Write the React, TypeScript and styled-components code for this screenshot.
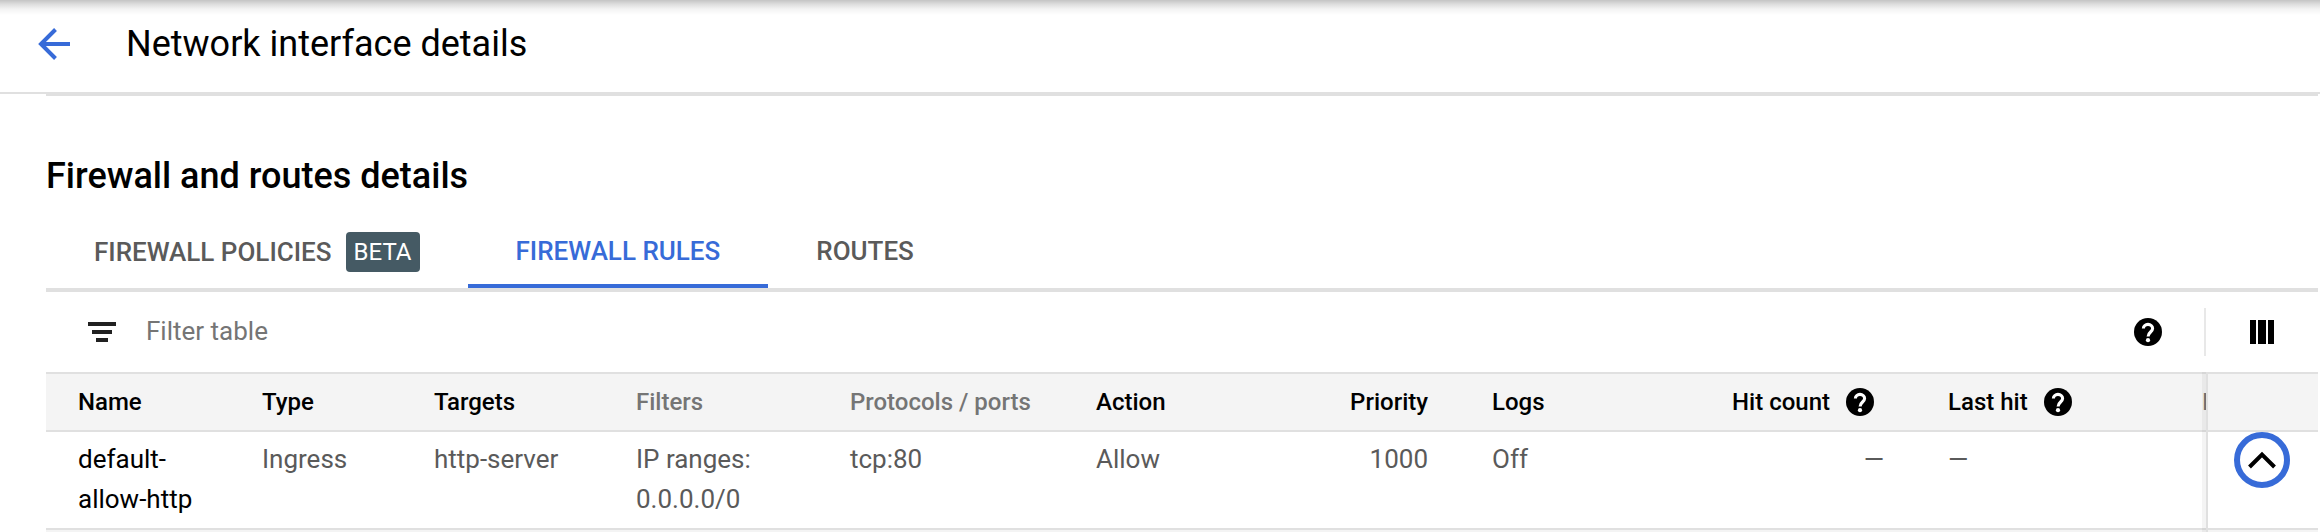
import React from "react";
import styled, { createGlobalStyle, css } from "styled-components";

const blue = "#376bd8";
const line = "#e0e0e0";

const GlobalStyle = createGlobalStyle`
  * { box-sizing: border-box; }
  body { margin: 0; background: #fff; font-family: Roboto, "Liberation Sans", sans-serif; color: #000; }
`;

const Page = styled.div`
  height: 532px;
  overflow: hidden;
  background: #fff;
`;

const Header = styled.header`
  height: 94px;
  display: flex;
  align-items: flex-start;
  padding: 22px 0 0 38px;
  border-bottom: 2px solid ${line};
  background: linear-gradient(#c4c4c4 0, #dcdcdc 4px, #f3f3f3 9px, #fff 15px);
`;

const BackButton = styled.button`
  display: flex;
  padding: 0;
  border: 0;
  background: none;
  margin: 6px 56px 0 0;
`;

const Title = styled.h1`
  margin: 0;
  font-size: 36px;
  line-height: 44px;
  font-weight: 400;
`;

const Content = styled.main`
  margin: 0 2px 0 46px;
  border-top: 2px solid ${line};
`;

const SectionTitle = styled.h2`
  margin: 0;
  padding-top: 58px;
  font-size: 36px;
  line-height: 44px;
  font-weight: 500;
`;

const Tabs = styled.nav`
  display: flex;
  height: 74px;
  margin-top: 20px;
  border-bottom: 4px solid ${line};
`;

const Tab = styled.div<{ $active?: boolean }>`
  display: flex;
  align-items: flex-start;
  padding: 13px 48px 0;
  font-size: 26px;
  line-height: 40px;
  font-weight: 500;
  white-space: nowrap;
  color: ${(p) => (p.$active ? blue : "#5a5a5a")};
  border-bottom: 4px solid ${(p) => (p.$active ? blue : "transparent")};
`;

const TabLabel = styled.span<{ $lowered?: boolean }>`
  padding-top: ${(p) => (p.$lowered ? 1 : 0)}px;
`;

const Badge = styled.span`
  margin: 1px 0 0 14px;
  width: 74px;
  height: 40px;
  border-radius: 4px;
  background: #455a64;
  color: #fff;
  font-size: 24px;
  font-weight: 400;
  text-align: center;
`;

const Toolbar = styled.div`
  height: 80px;
  display: flex;
  align-items: center;
  padding: 0 44px 0 42px;
`;

const FilterLabel = styled.span`
  flex: 1;
  margin: -1px 0 1px 30px;
  font-size: 26px;
  line-height: 40px;
  color: #757575;
`;

const Divider = styled.span`
  width: 2px;
  height: 48px;
  margin: 0 44px 0 42px;
  background: #e8e8e8;
`;

const TableArea = styled.div`
  display: flex;
  height: 160px;
`;

const Scroller = styled.div`
  flex: 1;
  min-width: 0;
  overflow: hidden;
`;

const headLook = css`
  height: 60px;
  background: #f4f4f4;
  border-top: 2px solid ${line};
  border-bottom: 2px solid ${line};
`;

const bodyLook = css`
  height: 98px;
  border-bottom: 2px solid ${line};
`;

const rowGrid = css`
  display: grid;
  grid-template-columns: 184px 172px 202px 214px 246px 200px 132px 264px 192px 318px 200px;
  padding-left: 32px;
`;

const HeadRow = styled.div`
  ${headLook}
  ${rowGrid}
  align-items: center;
  font-size: 24px;
  line-height: 28px;
  font-weight: 500;
  white-space: nowrap;
`;

const BodyRow = styled.div`
  ${bodyLook}
  ${rowGrid}
  padding-top: 7px;
  font-size: 26px;
  line-height: 40px;
  color: #5a5a5a;
`;

const HeadCell = styled.div<{ $end?: boolean; $muted?: boolean; $inset?: number }>`
  display: flex;
  align-items: center;
  gap: 16px;
  justify-content: ${(p) => (p.$end ? "flex-end" : "flex-start")};
  padding-right: ${(p) => (p.$end && p.$inset ? p.$inset : 0)}px;
  padding-left: ${(p) => (!p.$end && p.$inset ? p.$inset : 0)}px;
  color: ${(p) => (p.$muted ? "#757575" : "#000")};
`;

const BodyCell = styled.div<{ $end?: boolean; $strong?: boolean; $inset?: number }>`
  white-space: pre-line;
  text-align: ${(p) => (p.$end ? "right" : "left")};
  padding-left: ${(p) => p.$inset ?? 0}px;
  color: ${(p) => (p.$strong ? "#000" : "inherit")};
`;

const NextRow = styled.div`
  height: 2px;
  background: #f4f4f4;
`;

const StickyColumn = styled.div`
  position: relative;
  width: 112px;
  border-left: 2px solid rgba(0, 0, 0, 0.12);
  box-shadow: -4px 0 0 rgba(0, 0, 0, 0.045);
`;

const StickyHead = styled.div`
  ${headLook}
`;

const StickyBody = styled.div`
  ${bodyLook}
  padding-left: 26px;
`;

const ExpandButton = styled.button`
  display: flex;
  align-items: center;
  justify-content: center;
  width: 56px;
  height: 56px;
  padding: 0;
  border: 6px solid ${blue};
  border-radius: 50%;
  background: #fff;
`;

const HelpIcon = () => (
  <svg width="28" height="28" viewBox="0 0 28 28">
    <circle cx="14" cy="14" r="14" fill="#000" />
    <path
      d="M9.4 10.6a4.6 4.2 0 0 1 9.2 0c0 3.3-4.5 3.6-4.5 7.8"
      fill="none"
      stroke="#fff"
      strokeWidth="3.1"
    />
    <circle cx="14" cy="22.2" r="2.1" fill="#fff" />
  </svg>
);

const App = () => (
  <Page>
    <GlobalStyle />
    <Header>
      <BackButton aria-label="Back">
        <svg width="32" height="32" viewBox="0 0 32 32" fill="none" stroke={blue} strokeWidth="4">
          <path d="M32 16H4M17.5 1.5L3 16l14.5 14.5" />
        </svg>
      </BackButton>
      <Title>Network interface details</Title>
    </Header>
    <Content>
      <SectionTitle>Firewall and routes details</SectionTitle>
      <Tabs>
        <Tab>
          <TabLabel $lowered>FIREWALL POLICIES</TabLabel>
          <Badge>BETA</Badge>
        </Tab>
        <Tab $active>
          <TabLabel>FIREWALL RULES</TabLabel>
        </Tab>
        <Tab>
          <TabLabel>ROUTES</TabLabel>
        </Tab>
      </Tabs>
      <Toolbar>
        <svg width="28" height="20" viewBox="0 0 28 20" fill="#212121">
          <path d="M0 0h28v4H0zM4 8h20v4H4zM8 16h12v4H8z" />
        </svg>
        <FilterLabel>Filter table</FilterLabel>
        <HelpIcon />
        <Divider />
        <svg width="24" height="24" viewBox="0 0 24 24">
          <path d="M0 0h6v24H0zM8 0h8v24H8zM18 0h6v24h-6z" />
        </svg>
      </Toolbar>
      <TableArea>
        <Scroller>
          <HeadRow>
            <HeadCell>Name</HeadCell>
            <HeadCell>Type</HeadCell>
            <HeadCell>Targets</HeadCell>
            <HeadCell $muted>Filters</HeadCell>
            <HeadCell $muted>Protocols / ports</HeadCell>
            <HeadCell>Action</HeadCell>
            <HeadCell $end>Priority</HeadCell>
            <HeadCell $inset={64}>Logs</HeadCell>
            <HeadCell $end $inset={10}>
              Hit count
              <HelpIcon />
            </HeadCell>
            <HeadCell $inset={64}>
              Last hit
              <HelpIcon />
            </HeadCell>
            <HeadCell $muted>Instances</HeadCell>
          </HeadRow>
          <BodyRow>
            <BodyCell $strong>{"default-\nallow-http"}</BodyCell>
            <BodyCell>Ingress</BodyCell>
            <BodyCell>http-server</BodyCell>
            <BodyCell>{"IP ranges:\n0.0.0.0/0"}</BodyCell>
            <BodyCell>tcp:80</BodyCell>
            <BodyCell>Allow</BodyCell>
            <BodyCell $end>1000</BodyCell>
            <BodyCell $inset={64}>Off</BodyCell>
            <BodyCell $end>—</BodyCell>
            <BodyCell $inset={64}>—</BodyCell>
          </BodyRow>
          <NextRow />
        </Scroller>
        <StickyColumn>
          <StickyHead />
          <StickyBody>
            <ExpandButton aria-label="Scroll to top">
              <svg width="30" height="20" viewBox="0 0 30 20" fill="none" stroke="#000" strokeWidth="4">
                <path d="M2.5 17L15 4.5 27.5 17" />
              </svg>
            </ExpandButton>
          </StickyBody>
          <NextRow />
        </StickyColumn>
      </TableArea>
    </Content>
  </Page>
);

export default App;
